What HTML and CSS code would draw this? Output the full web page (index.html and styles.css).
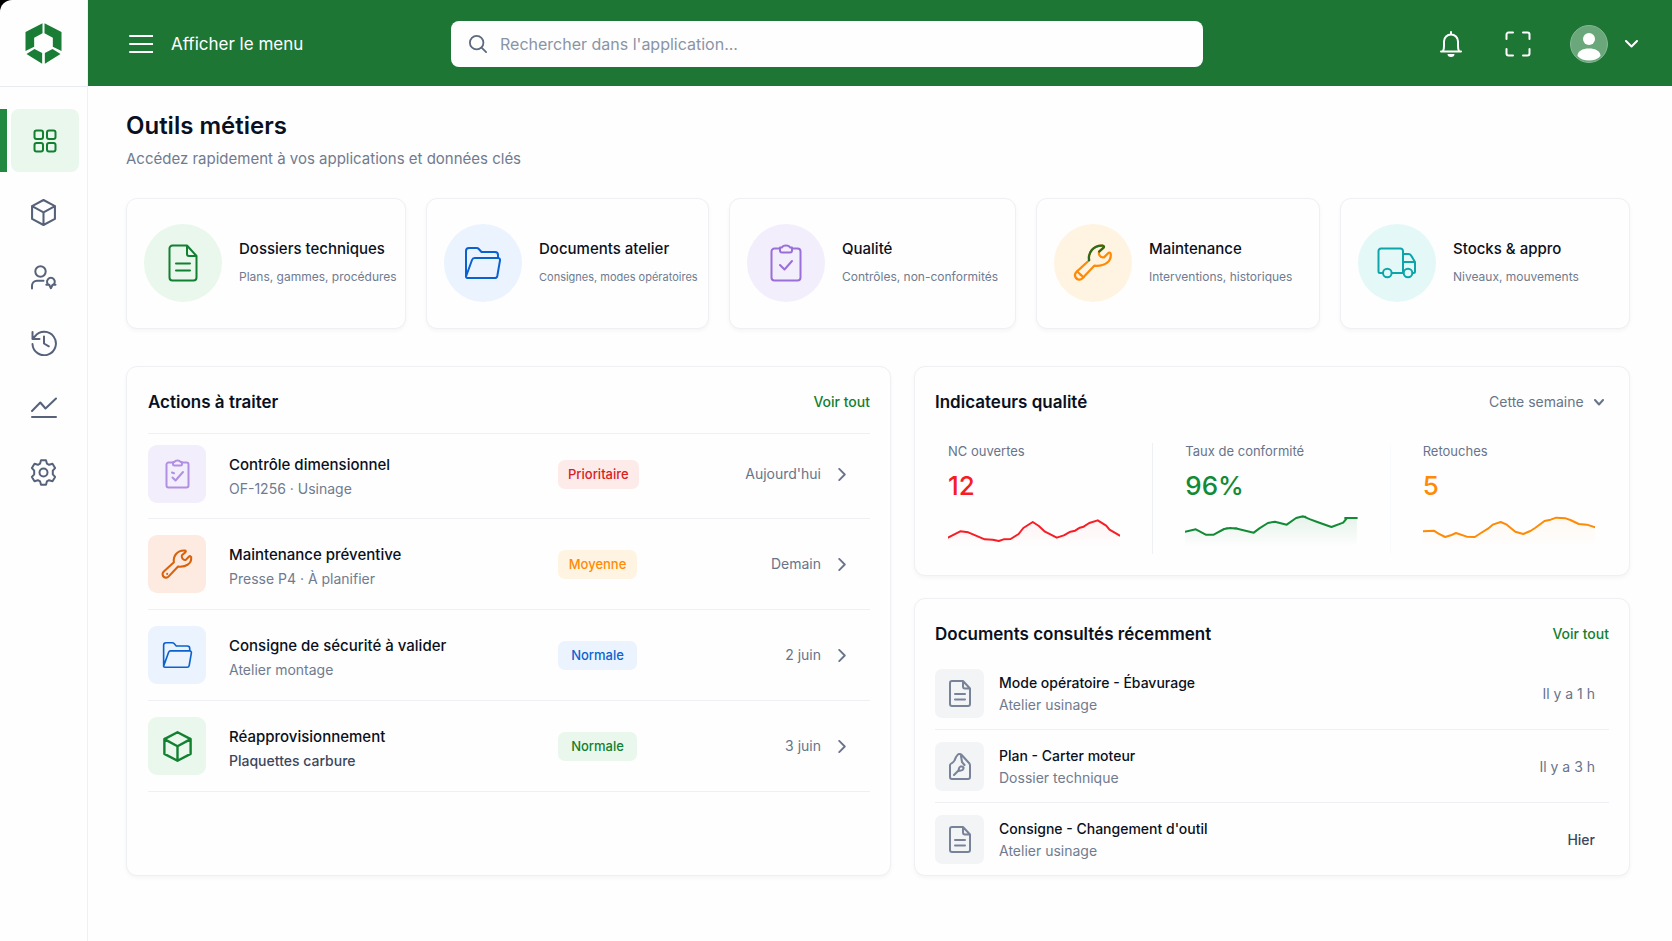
FILE: index.html
```html
<!DOCTYPE html>
<html lang="fr">
<head>
<meta charset="utf-8">
<meta name="viewport" content="width=device-width, initial-scale=1">
<title>Outils métiers</title>
<link rel="stylesheet" href="styles.css">
</head>
<body>
<svg class="sprite" aria-hidden="true">
  <symbol id="i-cube" viewBox="0 0 24 26"><path d="M12 1 23 6.8v12.4L12 25 1 19.2V6.8zM1 6.8l11 6 11-6M12 12.8V25"/></symbol>
  <symbol id="i-doc" viewBox="0 0 30 38"><path d="M19 1.5H4.500a3 3 0 0 0-3 3v29a3 3 0 0 0 3 3h21a3 3 0 0 0 3-3V12zM19 1.5V10a2 2 0 0 0 2 2h7.500M8 19.500h14M8 26.500h14"/></symbol>
  <symbol id="i-folder" viewBox="0 0 38 34"><path d="M2 31V5a3 3 0 0 1 3-3h7.500a3 3 0 0 1 2.300 1L17.500 6H31a3 3 0 0 1 3 3v3M10.500 12H34a2 2 0 0 1 2 2.400L33.300 30a2.500 2.500 0 0 1-2.500 2H3.500c-1.200 0-1.700-.8-1.300-2L8 14c.5-1.300 1.300-2 2.500-2z"/></symbol>
  <symbol id="i-wrench" viewBox="0 0 124 120"><path d="M50 53C46 30 62 6 93 8c4 1 4 4 1 7L81 26c-3 10 4 20 15 18l12-12c4-4 8-3 9 2 2 22-17 39-51 36l-36 38c-8 9-23 5-24-9 0-4 2-7 5-10zM24 98v1"/></symbol>
  <symbol id="i-file" viewBox="0 0 22 27"><path d="M14 1H3a2 2 0 0 0-2 2v21a2 2 0 0 0 2 2h16a2 2 0 0 0 2-2V8.500zM14 1v5.500a2 2 0 0 0 2 2h5M6 14h10M6 19.500h10"/></symbol>
  <symbol id="i-right" viewBox="0 0 8 14"><path d="M1 1l6 6-6 6"/></symbol>
</svg>
<div class="app">
  <aside class="side">
    <a class="logo" href="#" aria-label="Accueil">
      <svg viewBox="80 71 110 123"><path d="M132 72v30l-25 13v27l-26 13V98zM138 72v30l25 13v27l26 13V98zM108 149l23 12v32l-47-29zM162 149l-23 12v32l47-29z"/></svg>
    </a>
    <nav class="nav" aria-label="Navigation principale">
      <a class="nav-item active" href="#" aria-label="Tableau de bord"><span class="nav-tile"><svg width="24" height="24" viewBox="0 0 24 24"><rect x="1.500" y="1.500" width="8.500" height="8.500" rx="2"/><rect x="14" y="1.500" width="8.500" height="8.500" rx="2"/><rect x="1.500" y="14" width="8.500" height="8.500" rx="2"/><rect x="14" y="14" width="8.500" height="8.500" rx="2"/></svg></span></a>
      <a class="nav-item" href="#" aria-label="Articles"><svg width="25" height="27"><use href="#i-cube"/></svg></a>
      <a class="nav-item" href="#" aria-label="Utilisateurs"><svg width="26" height="25" viewBox="0 0 26 25"><circle cx="9.500" cy="6.500" r="5.200"/><path d="M1 23.500v-2.800a5 5 0 0 1 5-5h6.500M18.200 20.200a3.900 3.900 0 1 1 3.400 0M15.300 19.700h2.900l1.700 3.500 1.700-3.500h2.900"/></svg></a>
      <a class="nav-item" href="#" aria-label="Historique"><svg width="26" height="26" viewBox="0 0 26 26"><path d="M1.500 14A11.700 11.700 0 1 0 4 6.300L1.500 9M1.500 2v7h7M13 6.500V13.500l4.800 2.800"/></svg></a>
      <a class="nav-item" href="#" aria-label="Statistiques"><svg width="26" height="22" viewBox="0 0 26 22"><path d="M1 14l8.300-8.500 5.200 6L25 1.500M1 20h24"/></svg></a>
      <a class="nav-item" href="#" aria-label="Paramètres"><svg width="27" height="27" viewBox="0 0 27 27"><circle cx="13.500" cy="13.500" r="4"/><path d="M11 1.300h5l.9 3.300 2.200 1.200 3.400-1 2.600 4.300-2.300 2.500v3.800l2.300 2.500-2.600 4.300-3.400-1-2.200 1.200-.9 3.300h-5l-.9-3.300-2.200-1.200-3.400 1-2.600-4.300 2.300-2.500v-3.800L1.900 9.100l2.600-4.300 3.400 1 2.200-1.200z"/></svg></a>
    </nav>
  </aside>
  <header class="top">
    <button class="menu" type="button"><svg width="24" height="20" viewBox="0 0 24 20"><path d="M1 2h23M1 10h23M1 18h23"/></svg><span>Afficher le menu</span></button>
    <label class="search"><svg width="18" height="18" viewBox="0 0 20 20"><circle cx="8.500" cy="8.500" r="7.500"/><path d="M14 14l5 5"/></svg><input type="search" placeholder="Rechercher dans l'application..." aria-label="Rechercher dans l'application"></label>
    <div class="tools">
      <button class="tool" type="button" aria-label="Notifications"><svg width="30" height="28" viewBox="-3 0 30 28"><path d="M2 21.500h20M4 21c1-1.500 1-3 1-5v-4.500a7 7 0 0 1 14 0V16c0 2 0 3.500 1 5M12 4.500V2"/><path class="solid" d="M8.500 24h7a3.500 3 0 0 1-7 0z"/></svg></button>
      <button class="tool" type="button" aria-label="Plein écran"><svg width="26" height="26" viewBox="0 0 26 26"><path d="M1.500 8V3.500a2 2 0 0 1 2-2H8M18 1.500h4.500a2 2 0 0 1 2 2V8M24.500 18v4.500a2 2 0 0 1-2 2H18M8 24.500H3.500a2 2 0 0 1-2-2V18"/></svg></button>
      <button class="tool account" type="button" aria-label="Mon compte"><svg width="38" height="38" viewBox="0 0 38 38"><circle class="halo" cx="19" cy="19" r="18.500"/><circle class="solid" cx="19" cy="14" r="6"/><path class="solid" d="M7.500 31c0-5 5-7.500 11.500-7.500s11.500 2.500 11.500 7.500c-2.500 3-7 4.500-11.500 4.500S10 34 7.500 31z"/></svg><svg width="13" height="8" viewBox="0 0 13 8"><path d="M1 1l5.500 5.500L12 1"/></svg></button>
    </div>
  </header>
  <main class="main">
    <h1>Outils métiers</h1>
    <p class="lead">Accédez rapidement à vos applications et données clés</p>

    <section class="apps" aria-label="Applications">
      <a class="card app-card" href="#"><span class="disc green"><svg width="30" height="38"><use href="#i-doc"/></svg></span><span class="app-text"><strong>Dossiers techniques</strong><small>Plans, gammes, procédures</small></span></a>
      <a class="card app-card compact" href="#"><span class="disc blue"><svg width="38" height="34"><use href="#i-folder"/></svg></span><span class="app-text"><strong>Documents atelier</strong><small>Consignes, modes opératoires</small></span></a>
      <a class="card app-card" href="#"><span class="disc violet"><svg width="32" height="38" viewBox="0 0 32 38"><path d="M10 4.500H4.500a3 3 0 0 0-3 3v26a3 3 0 0 0 3 3h23a3 3 0 0 0 3-3v-26a3 3 0 0 0-3-3H22M12 3.500c1-2.700 7-2.700 8 0h2v3a2 2 0 0 1-2 2h-8a2 2 0 0 1-2-2v-3zM10 21l4.500 4.500L22 17"/></svg></span><span class="app-text"><strong>Qualité</strong><small>Contrôles, non-conformités</small></span></a>
      <a class="card app-card" href="#"><span class="disc amber"><svg width="40" height="39" viewBox="0 0 124 120"><use href="#i-wrench"/><path class="jaw" d="M50 53C46 30 62 6 93 8c4 1 4 4 1 7L81 26"/><path d="M13 88l20 18"/></svg></span><span class="app-text"><strong>Maintenance</strong><small>Interventions, historiques</small></span></a>
      <a class="card app-card" href="#"><span class="disc teal"><svg width="40" height="32" viewBox="0 0 40 32"><path d="M5.500 26H3a1.500 1.500 0 0 1-1.500-1.500V4A2.500 2.500 0 0 1 4 1.500h19.500A2.500 2.500 0 0 1 26 4v22H15M26 7h5.500a3 3 0 0 1 2.600 1.500L38 15v9.500a1.500 1.500 0 0 1-1.500 1.500H36M26 15h12"/><circle cx="10.300" cy="26" r="4.300"/><circle cx="31" cy="26" r="4.300"/></svg></span><span class="app-text"><strong>Stocks &amp; appro</strong><small>Niveaux, mouvements</small></span></a>
    </section>

    <div class="panels">
      <section class="card actions">
        <div class="head"><h2>Actions à traiter</h2><a class="all" href="#">Voir tout</a></div>
        <ul class="list">
          <li><a class="task" href="#"><span class="tile violet soft"><svg width="25" height="30" viewBox="0 0 25 30"><path d="M8 3.500H3.500a2 2 0 0 0-2 2v21a2 2 0 0 0 2 2h18a2 2 0 0 0 2-2v-21a2 2 0 0 0-2-2H17M9.500 3c.7-2 5.300-2 6 0H17v2a1.500 1.500 0 0 1-1.500 1.500h-6A1.500 1.500 0 0 1 8 5V3zM7 13.500l2 .8M7.500 18.500l3 3L18 13"/></svg></span><span class="desc"><strong>Contrôle dimensionnel</strong><small>OF-1256 · Usinage</small></span><span class="badge red">Prioritaire</span><span class="date">Aujourd'hui</span><svg class="chev" width="8" height="13"><use href="#i-right"/></svg></a></li>
          <li><a class="task" href="#"><span class="tile orange"><svg width="32" height="32"><use href="#i-wrench"/></svg></span><span class="desc"><strong>Maintenance préventive</strong><small>Presse P4 · À planifier</small></span><span class="badge amber">Moyenne</span><span class="date">Demain</span><svg class="chev" width="8" height="13"><use href="#i-right"/></svg></a></li>
          <li><a class="task" href="#"><span class="tile blue"><svg width="31" height="28"><use href="#i-folder"/></svg></span><span class="desc"><strong>Consigne de sécurité à valider</strong><small>Atelier montage</small></span><span class="badge blue">Normale</span><span class="date">2 juin</span><svg class="chev" width="8" height="13"><use href="#i-right"/></svg></a></li>
          <li><a class="task" href="#"><span class="tile green"><svg width="29" height="31"><use href="#i-cube"/></svg></span><span class="desc"><strong>Réapprovisionnement</strong><small class="strong">Plaquettes carbure</small></span><span class="badge green">Normale</span><span class="date">3 juin</span><svg class="chev" width="8" height="13"><use href="#i-right"/></svg></a></li>
        </ul>
      </section>

      <div class="stack">
        <section class="card">
          <div class="head"><h2>Indicateurs qualité</h2>
            <div class="period"><select aria-label="Période"><option>Cette semaine</option></select><svg width="10" height="7" viewBox="0 0 10 7"><path d="M1 1l4 4.500L9 1"/></svg></div>
          </div>
          <div class="stats">
            <div class="stat c-red"><span>NC ouvertes</span><b>12</b>
              <svg class="spark" viewBox="82 455 366 105" preserveAspectRatio="none"><defs><linearGradient id="g1" x1="0" y1="0" x2="0" y2="1"><stop offset="0" stop-color="#f81c24" stop-opacity=".05"/><stop offset="1" stop-color="#f81c24" stop-opacity="0"/></linearGradient></defs><path fill="url(#g1)" d="M82 532 108 513 125 516 160 537 190 542 215 536 232 521 242 503 262 485 275 497 288 514 313 532 342 514 370 499 382 488 400 480 418 496 425 508 446 525V560H82z"/><path class="line" d="M82 532 108 513 125 516 160 537 177 538 190 542 200 537 215 536 232 521 242 503 262 485 275 497 288 514 313 532 328 525 342 514 352 511 362 502 370 499 382 488 400 480 418 496 425 508 446 525"/></svg></div>
            <i class="rule"></i>
            <div class="stat c-green"><span>Taux de conformité</span><b>96%</b>
              <svg class="spark" viewBox="584 455 366 105" preserveAspectRatio="none"><defs><linearGradient id="g2" x1="0" y1="0" x2="0" y2="1"><stop offset="0" stop-color="#128a36" stop-opacity=".1"/><stop offset="1" stop-color="#128a36" stop-opacity="0"/></linearGradient></defs><path fill="url(#g2)" d="M584 514 607 507 628 523 645 523 667 506 695 505 730 517 760 488 775 484 800 493 820 473 835 468 865 485 895 500 920 487 928 473H949V560H584z"/><path class="line" d="M584 514 607 507 628 523 645 523 667 506 680 503 695 505 730 517 742 504 760 488 775 484 800 493 820 473 835 468 850 477 865 485 895 500 920 487 928 473H949M672 504h22M832 469h8M924 473h25"/></svg></div>
            <i class="rule faint"></i>
            <div class="stat c-orange"><span>Retouches</span><b>5</b>
              <svg class="spark" viewBox="1087 455 366 105" preserveAspectRatio="none"><defs><linearGradient id="g3" x1="0" y1="0" x2="0" y2="1"><stop offset="0" stop-color="#ff8a05" stop-opacity=".05"/><stop offset="1" stop-color="#ff8a05" stop-opacity="0"/></linearGradient></defs><path fill="url(#g3)" d="M1087 513 1110 511 1134 530 1157 518 1180 529 1197 530 1225 505 1252 485 1275 503 1300 521 1325 503 1345 482 1370 472 1390 474 1420 490 1453 501V560H1087z"/><path class="line" d="M1087 513 1110 511 1120 520 1134 530 1146 525 1157 518 1180 529 1197 530 1210 518 1225 505 1235 493 1252 485 1265 493 1283 514 1300 521 1315 512 1325 503 1345 482 1358 478 1370 472 1390 474 1400 479 1418 491 1435 493 1453 501"/></svg></div>
          </div>
        </section>

        <section class="card docs">
          <div class="head"><h2>Documents consultés récemment</h2><a class="all" href="#">Voir tout</a></div>
          <ul class="list">
            <li><a class="doc" href="#"><span class="tile small grey"><svg width="22" height="27"><use href="#i-file"/></svg></span><span class="desc"><strong>Mode opératoire - Ébavurage</strong><small>Atelier usinage</small></span><time>Il y a 1 h</time></a></li>
            <li><a class="doc" href="#"><span class="tile small grey"><svg width="22" height="27" viewBox="0 0 22 27"><path d="M7 4 8.500 2c1-1.300 3-1.300 4.200 0L20 10c.6.700 1 1.500 1 2.300V24a2 2 0 0 1-2 2H3a2 2 0 0 1-2-2V12c0-1.500 3.500-2 4.500-4.500zM12 3l1 6 2.500 3M5 22l4-4c1.500-2 0-3 2.500-4.500 3-.5 4 1.500 2 3.500-2 1.500-4-.5-5.500 2L5 22z"/></svg></span><span class="desc"><strong>Plan - Carter moteur</strong><small>Dossier technique</small></span><time>Il y a 3 h</time></a></li>
            <li><a class="doc" href="#"><span class="tile small grey"><svg width="22" height="27"><use href="#i-file"/></svg></span><span class="desc"><strong>Consigne - Changement d'outil</strong><small>Atelier usinage</small></span><time class="strong">Hier</time></a></li>
          </ul>
        </section>
      </div>
    </div>
  </main>
</div>
</body>
</html>
```
FILE: styles.css
```css
* { box-sizing: border-box; }
html { background: #000; }
body {
  margin: 0;
  font-family: Inter, "Liberation Sans", sans-serif;
  font-size: 15px;
  line-height: 24px;
  color: #0a1020;
}
a { color: inherit; text-decoration: none; }
button, input, select { font: inherit; color: inherit; border: 0; background: none; padding: 0; margin: 0; }
button { cursor: pointer; }
h1, h2, p, ul { margin: 0; padding: 0; }
ul { list-style: none; }
svg { display: block; flex: none; fill: none; stroke: currentColor; stroke-width: 2; stroke-linecap: round; stroke-linejoin: round; }
.sprite { position: absolute; width: 0; height: 0; }

.app {
  min-height: 100vh;
  display: grid;
  grid-template: 86px 1fr / 88px minmax(0, 1fr);
  background: #fefefe;
  border-top-left-radius: 12px;
  overflow: hidden;
}

.side { grid-row: 1 / 3; border-right: 1px solid #eef0f4; }
.logo { height: 87px; display: flex; align-items: center; justify-content: center; border-bottom: 1px solid #e9ebf2; }
.logo svg { width: 37px; height: 41px; fill: #1a7d36; stroke: none; }
.nav { display: flex; flex-direction: column; gap: 16px; padding-top: 22px; color: #56627a; }
.nav-item { height: 49px; display: flex; align-items: center; justify-content: center; }
.nav-item.active { height: 63px; padding: 0 8px 0 4px; border-left: 7px solid #218a40; justify-content: stretch; color: #118030; }
.nav-tile { flex: 1; height: 100%; display: flex; align-items: center; justify-content: center; background: #eaf7ed; border-radius: 8px; }

.top { background: #1e7635; color: #fff; display: grid; grid-template-columns: 322px minmax(0, 752px) 1fr; align-items: center; padding: 1px 34px 0 41px; }
.menu { display: flex; align-items: center; gap: 18px; font-size: 17px; justify-self: start; }
.search { height: 46px; display: flex; align-items: center; gap: 13px; padding: 0 18px; background: #fefefe; border-radius: 8px; color: #5d6980; }
.search input { flex: 1; min-width: 0; font-size: 16px; outline: 0; }
.search input::placeholder { color: #8a94a6; opacity: 1; }
.tools { display: flex; align-items: center; justify-content: flex-end; gap: 39px; }
.account { display: flex; align-items: center; gap: 17px; }
.solid { fill: #fff; stroke: none; }
.halo { fill: #6aa87b; stroke: #86b893; stroke-width: 1; }

.main { padding: 25px 42px 64px 38px; }
h1 { font-size: 24px; line-height: 30px; font-weight: 600; }
.lead { margin-top: 6px; color: #707b8f; font-size: 15px; }

.card { background: #fefefe; border: 1px solid #eef0f4; border-radius: 11px; box-shadow: 0 2px 4px rgba(20, 30, 60, .04); }
.apps { display: grid; grid-template-columns: minmax(0, 280fr) minmax(0, 283fr) minmax(0, 287fr) minmax(0, 284fr) minmax(0, 290fr); gap: 20px; margin-top: 27px; }
.app-card { display: flex; align-items: center; gap: 17px; padding: 24px 0 26px 17px; min-height: 131px; }
.disc { flex: none; width: 78px; height: 78px; border-radius: 50%; display: flex; align-items: center; justify-content: center; }
.disc.amber svg { stroke-width: 7; }
.jaw { stroke: #2a6b22; }
.app-text { display: flex; flex-direction: column; gap: 4px; min-width: 0; white-space: nowrap; }
.app-text strong { font-weight: 500; font-size: 15px; }
.app-text small { font-size: 12px; color: #707b8f; }
.compact small { font-size: 11px; }

.green { background: #eaf7ed; color: #118030; }
.blue { background: #ebf3ff; color: #0b62cf; }
.violet { background: #f3eefc; color: #9a6fd8; }
.amber { background: #fff4e2; color: #ff8a05; }
.teal { background: #e5f8f8; color: #0ba5aa; }
.orange { background: #fdebe2; color: #d9620c; }
.red { background: #fdebea; color: #d8201f; }
.grey { background: #f2f4f6; color: #78839a; }
.soft { color: #b18fe3; }

.panels { display: grid; grid-template-columns: 765fr 716fr; gap: 23px; margin-top: 37px; }
.stack { display: flex; flex-direction: column; gap: 22px; }
.head { display: flex; align-items: center; justify-content: space-between; }
h2 { font-size: 17px; line-height: 24px; font-weight: 600; }
.all { font-size: 14px; font-weight: 500; color: #118030; }

.actions { padding: 0 20px 0 21px; }
.actions .head { height: 67px; padding-top: 4px; border-bottom: 1px solid #eef0f4; }
.list li { border-bottom: 1px solid #eef0f4; }
.task { display: grid; grid-template-columns: 58px minmax(0, 1fr) 80px 183px 49px; align-items: center; padding: 16px 0; }
.list li:first-child .task { padding: 11px 0 15px; }
.tile { width: 58px; height: 58px; border-radius: 9px; display: flex; align-items: center; justify-content: center; }
.tile.orange svg { stroke-width: 8; }
.desc { display: flex; flex-direction: column; min-width: 0; }
.task .desc { padding: 5px 0 0 23px; }
.desc strong { font-weight: 500; font-size: 15px; line-height: 25px; }
.desc small { font-size: 14px; line-height: 24px; color: #707b8f; }
.desc .strong { font-weight: 500; color: #3b475d; }
.badge { justify-self: start; min-width: 79px; padding: 0 10px; border-radius: 7px; font-size: 13px; line-height: 29px; font-weight: 500; text-align: center; }
.date { text-align: right; font-size: 14px; color: #68748a; }
.chev { margin-left: 17px; color: #68748a; }

.stack .head { padding: 23px 20px 0; }
.period { display: flex; align-items: center; gap: 10px; padding-right: 5px; color: #68748a; font-size: 14px; }
.period select { appearance: none; }
.stats { display: grid; grid-template-columns: 1fr 1px 1fr 1px 1fr; gap: 32px; padding: 29px 34px 21px 33px; }
.stat { display: flex; flex-direction: column; min-width: 0; padding-bottom: 7px; }
.stat span { font-size: 13px; line-height: 16px; color: #68748a; white-space: nowrap; }
.stat b { margin: 12px 0 11px; font-size: 26px; line-height: 30px; font-weight: 500; }
.spark { width: 100%; height: 35px; stroke: none; }
.spark .line { stroke: currentColor; stroke-width: 2; vector-effect: non-scaling-stroke; }
.rule { background: #eef0f4; }
.rule.faint { background: #fafbfc; }
.c-red { color: #f81c24; }
.c-green { color: #128a36; }
.c-orange { color: #ff8a05; }

.docs .list { padding: 11px 20px 0; }
.docs .list li:last-child { border-bottom: 0; }
.doc { display: flex; align-items: center; gap: 15px; padding: 12px 14px 11px 0; }
.tile.small { width: 49px; height: 49px; border-radius: 7px; }
.doc .desc { flex: 1; }
.doc .desc strong { font-size: 14px; line-height: 22px; }
.doc .desc small { font-size: 14px; line-height: 22px; }
.doc time { font-size: 14px; color: #68748a; }
.doc time.strong { font-weight: 500; color: #3b475d; }
```
